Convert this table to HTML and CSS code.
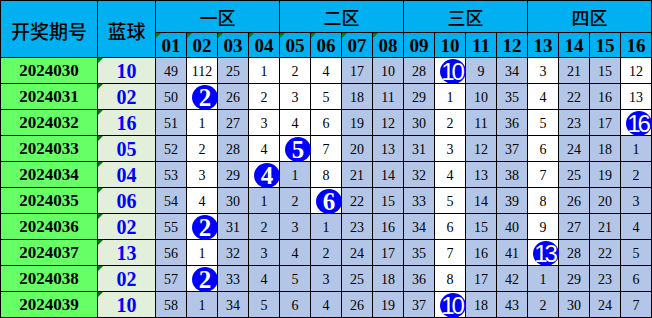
FILE: index.html
```html
<!DOCTYPE html>
<html lang="zh">
<head>
<meta charset="utf-8">
<title>蓝球遗漏表</title>
<link rel="stylesheet" href="styles.css">
</head>
<body>
<div class="sheet">
  <div class="hd h-id">开奖期号</div>
  <div class="hd h-blue">蓝球</div>
  <div class="hd zone">一区</div>
  <div class="hd zone">二区</div>
  <div class="hd zone">三区</div>
  <div class="hd zone">四区</div>
  <div class="hd num tri">01</div><div class="hd num tri">02</div><div class="hd num tri">03</div><div class="hd num tri">04</div>
  <div class="hd num tri">05</div><div class="hd num tri">06</div><div class="hd num tri">07</div><div class="hd num tri">08</div>
  <div class="hd num">09</div><div class="hd num">10</div><div class="hd num">11</div><div class="hd num">12</div>
  <div class="hd num">13</div><div class="hd num">14</div><div class="hd num">15</div><div class="hd num">16</div>

  <div class="c id">2024030</div><div class="c bl tri">10</div>
  <div class="c b">49</div><div class="c w">112</div><div class="c b">25</div><div class="c w">1</div><div class="c w">2</div><div class="c w">4</div><div class="c b">17</div><div class="c b">10</div>
  <div class="c b">28</div><div class="c w"><span class="ball dd">10</span></div><div class="c b">9</div><div class="c b">34</div><div class="c w">3</div><div class="c b">21</div><div class="c b">15</div><div class="c w">12</div>

  <div class="c id">2024031</div><div class="c bl tri">02</div>
  <div class="c b">50</div><div class="c w"><span class="ball">2</span></div><div class="c b">26</div><div class="c w">2</div><div class="c w">3</div><div class="c w">5</div><div class="c b">18</div><div class="c b">11</div>
  <div class="c b">29</div><div class="c w">1</div><div class="c b">10</div><div class="c b">35</div><div class="c w">4</div><div class="c b">22</div><div class="c b">16</div><div class="c w">13</div>

  <div class="c id">2024032</div><div class="c bl tri">16</div>
  <div class="c b">51</div><div class="c w">1</div><div class="c b">27</div><div class="c w">3</div><div class="c w">4</div><div class="c w">6</div><div class="c b">19</div><div class="c b">12</div>
  <div class="c b">30</div><div class="c w">2</div><div class="c b">11</div><div class="c b">36</div><div class="c w">5</div><div class="c b">23</div><div class="c b">17</div><div class="c w"><span class="ball dd">16</span></div>

  <div class="c id">2024033</div><div class="c bl tri">05</div>
  <div class="c b">52</div><div class="c w">2</div><div class="c b">28</div><div class="c w">4</div><div class="c w"><span class="ball">5</span></div><div class="c w">7</div><div class="c b">20</div><div class="c b">13</div>
  <div class="c b">31</div><div class="c w">3</div><div class="c b">12</div><div class="c b">37</div><div class="c w">6</div><div class="c b">24</div><div class="c b">18</div><div class="c b">1</div>

  <div class="c id">2024034</div><div class="c bl tri">04</div>
  <div class="c b">53</div><div class="c w">3</div><div class="c b">29</div><div class="c w"><span class="ball">4</span></div><div class="c b">1</div><div class="c w">8</div><div class="c b">21</div><div class="c b">14</div>
  <div class="c b">32</div><div class="c w">4</div><div class="c b">13</div><div class="c b">38</div><div class="c w">7</div><div class="c b">25</div><div class="c b">19</div><div class="c b">2</div>

  <div class="c id">2024035</div><div class="c bl tri">06</div>
  <div class="c b">54</div><div class="c w">4</div><div class="c b">30</div><div class="c b">1</div><div class="c b">2</div><div class="c w"><span class="ball">6</span></div><div class="c b">22</div><div class="c b">15</div>
  <div class="c b">33</div><div class="c w">5</div><div class="c b">14</div><div class="c b">39</div><div class="c w">8</div><div class="c b">26</div><div class="c b">20</div><div class="c b">3</div>

  <div class="c id">2024036</div><div class="c bl tri">02</div>
  <div class="c b">55</div><div class="c w"><span class="ball">2</span></div><div class="c b">31</div><div class="c b">2</div><div class="c b">3</div><div class="c b">1</div><div class="c b">23</div><div class="c b">16</div>
  <div class="c b">34</div><div class="c w">6</div><div class="c b">15</div><div class="c b">40</div><div class="c w">9</div><div class="c b">27</div><div class="c b">21</div><div class="c b">4</div>

  <div class="c id">2024037</div><div class="c bl tri">13</div>
  <div class="c b">56</div><div class="c w">1</div><div class="c b">32</div><div class="c b">3</div><div class="c b">4</div><div class="c b">2</div><div class="c b">24</div><div class="c b">17</div>
  <div class="c b">35</div><div class="c w">7</div><div class="c b">16</div><div class="c b">41</div><div class="c w"><span class="ball dd">13</span></div><div class="c b">28</div><div class="c b">22</div><div class="c b">5</div>

  <div class="c id">2024038</div><div class="c bl tri">02</div>
  <div class="c b">57</div><div class="c w"><span class="ball">2</span></div><div class="c b">33</div><div class="c b">4</div><div class="c b">5</div><div class="c b">3</div><div class="c b">25</div><div class="c b">18</div>
  <div class="c b">36</div><div class="c w">8</div><div class="c b">17</div><div class="c b">42</div><div class="c b">1</div><div class="c b">29</div><div class="c b">23</div><div class="c b">6</div>

  <div class="c id">2024039</div><div class="c bl tri">10</div>
  <div class="c b">58</div><div class="c b">1</div><div class="c b">34</div><div class="c b">5</div><div class="c b">6</div><div class="c b">4</div><div class="c b">26</div><div class="c b">19</div>
  <div class="c b">37</div><div class="c w"><span class="ball dd">10</span></div><div class="c b">18</div><div class="c b">43</div><div class="c b">2</div><div class="c b">30</div><div class="c b">24</div><div class="c b">7</div>
</div>
</body>
</html>
```

FILE: styles.css
```css
html, body {
  margin: 0;
  padding: 0;
  background: #ffffff;
}

.sheet {
  display: grid;
  grid-template-columns: 96px 57px repeat(16, 30px);
  grid-template-rows: 31px 24px repeat(10, 25px);
  gap: 1px;
  padding: 1px;
  background: #000000;
  width: max-content;
}

.hd {
  background: #00b0f0;
  color: #000000;
  display: flex;
  align-items: center;
  justify-content: center;
}

.h-id, .h-blue {
  grid-row: span 2;
  font-family: "Noto Sans CJK SC", sans-serif;
  font-size: 19px;
  font-weight: 500;
  padding-top: 2px;
}

.zone {
  grid-column: span 4;
  font-family: "Noto Sans CJK SC", sans-serif;
  font-size: 18px;
  font-weight: 500;
}

.num {
  font-family: "Liberation Serif", serif;
  font-size: 19px;
  font-weight: bold;
  padding-top: 1px;
}

.c {
  display: flex;
  align-items: center;
  justify-content: center;
  font-family: "Liberation Serif", serif;
  font-size: 14px;
  color: #000000;
  padding-top: 2px;
}

.id {
  background: #66ff66;
  font-size: 17px;
  font-weight: bold;
  padding-top: 1px;
}

.bl {
  background: #e2efda;
  color: #0000ff;
  font-size: 20px;
  font-weight: bold;
  padding-top: 1px;
}

.b {
  background: #b4c6e7;
}

.w {
  background: #ffffff;
}

.tri {
  position: relative;
}

.tri::before {
  content: "";
  position: absolute;
  left: 0;
  top: 0;
  border-top: 5px solid #00800a;
  border-right: 5px solid transparent;
}

.ball {
  position: relative;
  z-index: 1;
  width: 26px;
  height: 25px;
  border-radius: 50%;
  background: #0000ff;
  color: #ffffff;
  display: flex;
  align-items: center;
  justify-content: center;
  font-family: "Liberation Serif", serif;
  font-size: 25px;
  font-weight: bold;
  line-height: 1;
  transform: translate(3px, 0px);
}

.ball.dd {
  font-family: "Liberation Sans Narrow", "Liberation Sans", sans-serif;
  font-weight: normal;
  font-size: 24px;
  letter-spacing: -3px;
  text-indent: -3px;
}
```
